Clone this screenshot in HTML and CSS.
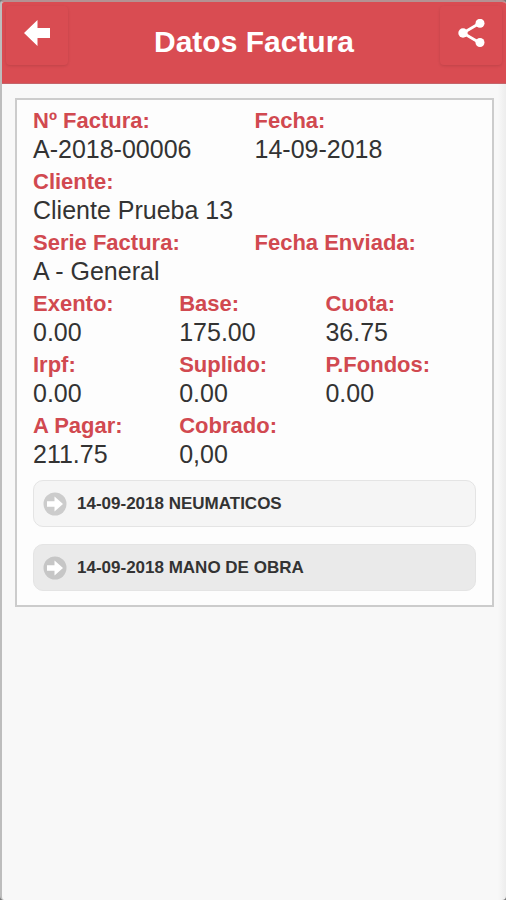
FILE: index.html
```html
<!DOCTYPE html>
<html lang="es">
<head>
<meta charset="utf-8">
<meta name="viewport" content="width=device-width, initial-scale=1">
<title>Datos Factura</title>
<link rel="stylesheet" href="styles.css">
</head>
<body>
<div class="screen">
  <header class="bar">
    <button class="bar-button" type="button" aria-label="Volver">
      <svg class="bar-icon" viewBox="0 0 28 28" aria-hidden="true"><path fill="#fff" d="M1 14 14.500 1V9H27V19H14.500V27Z"/></svg>
    </button>
    <h1 class="bar-title">Datos Factura</h1>
    <button class="bar-button" type="button" aria-label="Compartir">
      <svg class="bar-icon" viewBox="0 0 28 28" aria-hidden="true"><path d="M23 4 6 14 23 24" fill="none" stroke="#fff" stroke-width="2.800"/><g fill="#fff"><circle cx="6" cy="14" r="4.700"/><circle cx="23" cy="4.300" r="4.500"/><circle cx="23" cy="23.500" r="4.500"/></g></svg>
    </button>
  </header>
  <main class="card">
    <dl class="row halves">
      <div><dt>Nº Factura:</dt><dd>A-2018-00006</dd></div>
      <div><dt>Fecha:</dt><dd>14-09-2018</dd></div>
    </dl>
    <dl class="row">
      <div><dt>Cliente:</dt><dd>Cliente Prueba 13</dd></div>
    </dl>
    <dl class="row halves">
      <div><dt>Serie Factura:</dt><dd>A - General</dd></div>
      <div><dt>Fecha Enviada:</dt><dd></dd></div>
    </dl>
    <dl class="row thirds">
      <div><dt>Exento:</dt><dd>0.00</dd></div>
      <div><dt>Base:</dt><dd>175.00</dd></div>
      <div><dt>Cuota:</dt><dd>36.75</dd></div>
      <div><dt>Irpf:</dt><dd>0.00</dd></div>
      <div><dt>Suplido:</dt><dd>0.00</dd></div>
      <div><dt>P.Fondos:</dt><dd>0.00</dd></div>
      <div><dt>A Pagar:</dt><dd>211.75</dd></div>
      <div><dt>Cobrado:</dt><dd>0,00</dd></div>
    </dl>
    <div class="lines">
      <button class="line" type="button">
        <svg class="line-icon" viewBox="0 0 24 24" aria-hidden="true"><circle cx="12" cy="12" r="11.500" fill="#ccc"/><path fill="#fff" d="M4 9.300H11.500V4.500L20 12 11.500 19.500V14.700H4Z"/></svg>
        14-09-2018 NEUMATICOS
      </button>
      <button class="line line-active" type="button">
        <svg class="line-icon" viewBox="0 0 24 24" aria-hidden="true"><circle cx="12" cy="12" r="11.500" fill="#c6c6c6"/><path fill="#fff" d="M4 9.300H11.500V4.500L20 12 11.500 19.500V14.700H4Z"/></svg>
        14-09-2018 MANO DE OBRA
      </button>
    </div>
  </main>
</div>
</body>
</html>
```
FILE: styles.css
```css
* {
  box-sizing: border-box;
}

body {
  margin: 0;
  background: #777;
  font-family: "Liberation Sans", Arial, sans-serif;
  color: #333;
}

.screen {
  min-height: 100vh;
  border-top: 2px solid #b49293;
  border-left: 2px solid #bdbdbd;
  border-radius: 4px;
  background: linear-gradient(to left, #ededed, #f8f8f8 8px);
  overflow: hidden;
}

.bar {
  display: flex;
  justify-content: space-between;
  height: 82px;
  padding: 4px 4px 0;
  border-bottom: 1px solid #c4646a;
  background: #d94c52;
}

.bar-button {
  display: flex;
  justify-content: center;
  width: 62px;
  height: 59px;
  padding: 13px 0 0;
  border: 0;
  border-radius: 4px;
  background: transparent;
  box-shadow: 0 1px 3px rgba(0, 0, 0, 0.12);
}

.bar-icon {
  width: 28px;
  height: 28px;
}

.bar-title {
  margin: 0;
  padding-top: 18px;
  font-size: 30px;
  line-height: 36px;
  color: #fff;
}

.card {
  margin: 14px 12px 0 13px;
  padding: 7px 16px 14px;
  border: 2px solid #ccc;
  background: #fdfdfd;
}

.row {
  display: grid;
  row-gap: 5px;
  margin: 0 0 5px;
}

.halves {
  grid-template-columns: repeat(2, 1fr);
}

.thirds {
  grid-template-columns: repeat(3, 33%);
}

.row dt {
  font-size: 22px;
  line-height: 28px;
  font-weight: bold;
  color: #d14950;
}

.row dd {
  margin: 0;
  font-size: 25px;
  line-height: 28px;
}

.lines {
  display: grid;
  gap: 17px;
  padding-top: 7px;
}

.line {
  display: flex;
  align-items: center;
  gap: 10px;
  height: 47px;
  padding: 0 9px;
  border: 1px solid #e4e4e4;
  border-radius: 10px;
  background: #f5f5f5;
  font: bold 17px/20px "Liberation Sans", Arial, sans-serif;
  color: #333;
  text-align: left;
}

.line-active {
  background: #eaeaea;
}

.line-icon {
  width: 24px;
  height: 24px;
}
```
